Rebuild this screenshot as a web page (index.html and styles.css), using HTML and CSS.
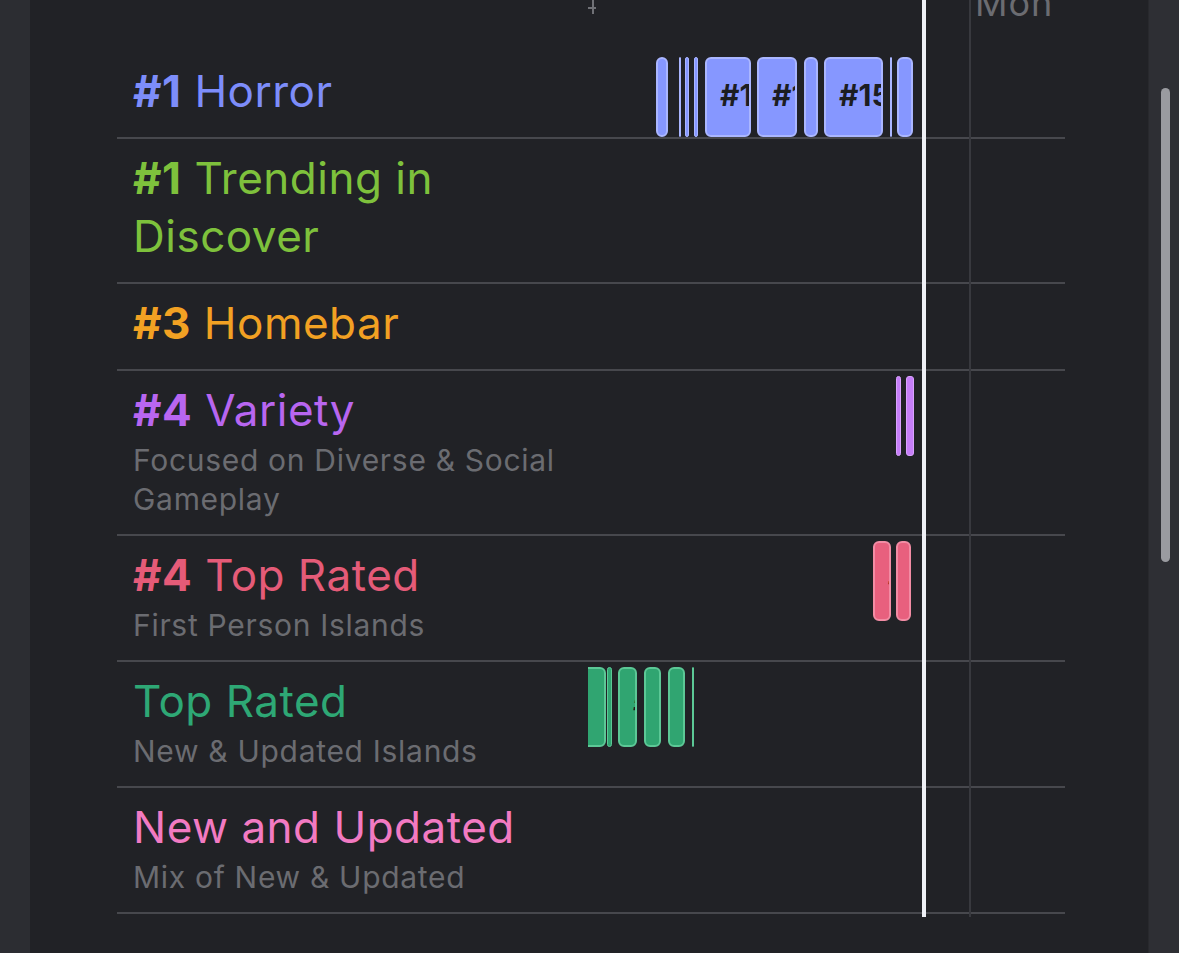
FILE: index.html
```html
<!DOCTYPE html>
<html lang="en">
<head>
    <meta charset="UTF-8">
    <meta name="viewport" content="width=device-width, initial-scale=1.0">
    <title>Discover Timeline</title>
    <link rel="stylesheet" href="styles.css">
</head>
<body>
    <div class="app">
        <div class="rail"></div>

        <main class="panel">
            <div class="chart">
                <div class="axis">
                    <div class="axis-label"></div>
                    <div class="axis-track">
                        <span class="tick"></span>
                        <span class="day" style="left:387px">Mon</span>
                    </div>
                </div>

                <div class="row">
                    <div class="label">
                        <div class="title blue"><b>#1</b> Horror</div>
                    </div>
                    <div class="track blue">
                        <span class="bar" style="left:68px;width:12px"></span>
                        <span class="bar thin" style="left:91px;width:2px"></span>
                        <span class="bar thin" style="left:97px;width:4px"></span>
                        <span class="bar thin" style="left:106px;width:4px"></span>
                        <span class="bar" style="left:117px;width:46px">#1</span>
                        <span class="bar" style="left:169px;width:40px">#1</span>
                        <span class="bar" style="left:216px;width:14px"></span>
                        <span class="bar" style="left:236px;width:59px">#15</span>
                        <span class="bar thin" style="left:302px;width:1px"></span>
                        <span class="bar" style="left:309px;width:16px">#1</span>
                    </div>
                </div>

                <div class="row">
                    <div class="label">
                        <div class="title green"><b>#1</b> Trending in Discover</div>
                    </div>
                    <div class="track"></div>
                </div>

                <div class="row">
                    <div class="label">
                        <div class="title orange"><b>#3</b> Homebar</div>
                    </div>
                    <div class="track"></div>
                </div>

                <div class="row">
                    <div class="label">
                        <div class="title purple"><b>#4</b> Variety</div>
                        <div class="sub">Focused on Diverse &amp; Social Gameplay</div>
                    </div>
                    <div class="track purple">
                        <span class="bar thin" style="left:308px;width:5px"></span>
                        <span class="bar thin" style="left:318px;width:8px"></span>
                    </div>
                </div>

                <div class="row">
                    <div class="label">
                        <div class="title red"><b>#4</b> Top Rated</div>
                        <div class="sub">First Person Islands</div>
                    </div>
                    <div class="track red">
                        <span class="bar" style="left:285px;width:18px">#4</span>
                        <span class="bar" style="left:308px;width:15px"></span>
                    </div>
                </div>

                <div class="row">
                    <div class="label">
                        <div class="title teal">Top Rated</div>
                        <div class="sub">New &amp; Updated Islands</div>
                    </div>
                    <div class="track teal">
                        <span class="bar" style="left:-6px;width:24px"></span>
                        <span class="bar thin" style="left:19px;width:5px"></span>
                        <span class="bar" style="left:30px;width:19px">#2</span>
                        <span class="bar" style="left:56px;width:17px">#3</span>
                        <span class="bar" style="left:80px;width:17px">#3</span>
                        <span class="bar thin" style="left:104px;width:1px"></span>
                    </div>
                </div>

                <div class="row">
                    <div class="label">
                        <div class="title pink">New and Updated</div>
                        <div class="sub">Mix of New &amp; Updated</div>
                    </div>
                    <div class="track"></div>
                </div>

                <div class="gridline"></div>
                <div class="now"></div>
            </div>
        </main>

        <aside class="scroll">
            <div class="thumb"></div>
        </aside>
    </div>
</body>
</html>
```

FILE: styles.css
```css
body {
    margin: 0;
    padding: 0;
    height: 100vh;
    overflow: hidden;
    background: #2d2e33;
    font-family: Inter, "Noto Sans", sans-serif;
}

.app {
    display: flex;
    height: 100vh;
}

.rail {
    width: 30px;
    background: #2c2d32;
}

.panel {
    flex: 1;
    background: #212226;
    padding: 0 83px 0 87px;
}

.scroll {
    width: 30px;
    background: #2e2f34;
    border-left: 1px solid #28292d;
    padding-top: 88px;
}

.thumb {
    width: 9px;
    height: 474px;
    margin-left: 12px;
    border-radius: 5px;
    background: #9a9ba0;
}

/* chart */

.chart {
    position: relative;
}

.axis {
    display: grid;
    grid-template-columns: 471px 1fr;
    height: 52px;
}

.axis-track {
    position: relative;
}

.tick {
    position: absolute;
    left: 4px;
    top: 0;
    width: 2px;
    height: 14px;
    background: #707176;
}

.tick::after {
    content: "";
    position: absolute;
    left: -4px;
    top: 7px;
    width: 8px;
    height: 2px;
    background: #707176;
}

.day {
    position: absolute;
    top: -15px;
    font-size: 36px;
    line-height: 36px;
    letter-spacing: 1px;
    color: #6b6c71;
}

.row {
    display: grid;
    grid-template-columns: 471px 1fr;
    border-bottom: 2px solid #47484d;
}

.label {
    padding: 10px 0 17px 16px;
}

.title {
    font-size: 44px;
    line-height: 58px;
    letter-spacing: 0.5px;
    padding-right: 40px;
}

.title b {
    font-weight: 700;
}

.sub {
    font-size: 30px;
    line-height: 39px;
    letter-spacing: 0.7px;
    color: #6b6c71;
    padding: 2px 20px 0 0;
    margin-bottom: -2px;
}

.blue { color: #7d8dfa; }
.green { color: #7ec13c; }
.orange { color: #f2a123; }
.purple { color: #b866f0; }
.red { color: #e55b78; }
.teal { color: #2ea875; }
.pink { color: #f27ac2; }

.track {
    position: relative;
    overflow: hidden;
}

.bar {
    position: absolute;
    top: 5px;
    height: 80px;
    box-sizing: border-box;
    border-radius: 6px;
    border: 2px solid;
    overflow: hidden;
    text-indent: 13px;
    font-size: 30px;
    font-weight: 700;
    line-height: 72px;
    color: #1c1d22;
    white-space: nowrap;
}

.bar.thin {
    border-width: 1px;
    border-radius: 3px;
}

.track.blue .bar {
    background: #8697ff;
    border-color: #aab6ff;
}

.track.purple .bar {
    background: #c67ef8;
    border-color: #d9a2ff;
}

.track.red .bar {
    background: #e8607e;
    border-color: #f28ca4;
}

.track.teal .bar {
    background: #30a571;
    border-color: #5cc896;
}

.gridline {
    position: absolute;
    left: 852px;
    top: 0;
    bottom: -3px;
    width: 2px;
    background: #38393e;
}

.now {
    position: absolute;
    left: 805px;
    top: 0;
    bottom: -3px;
    width: 4px;
    background: #eef0f5;
}
```
